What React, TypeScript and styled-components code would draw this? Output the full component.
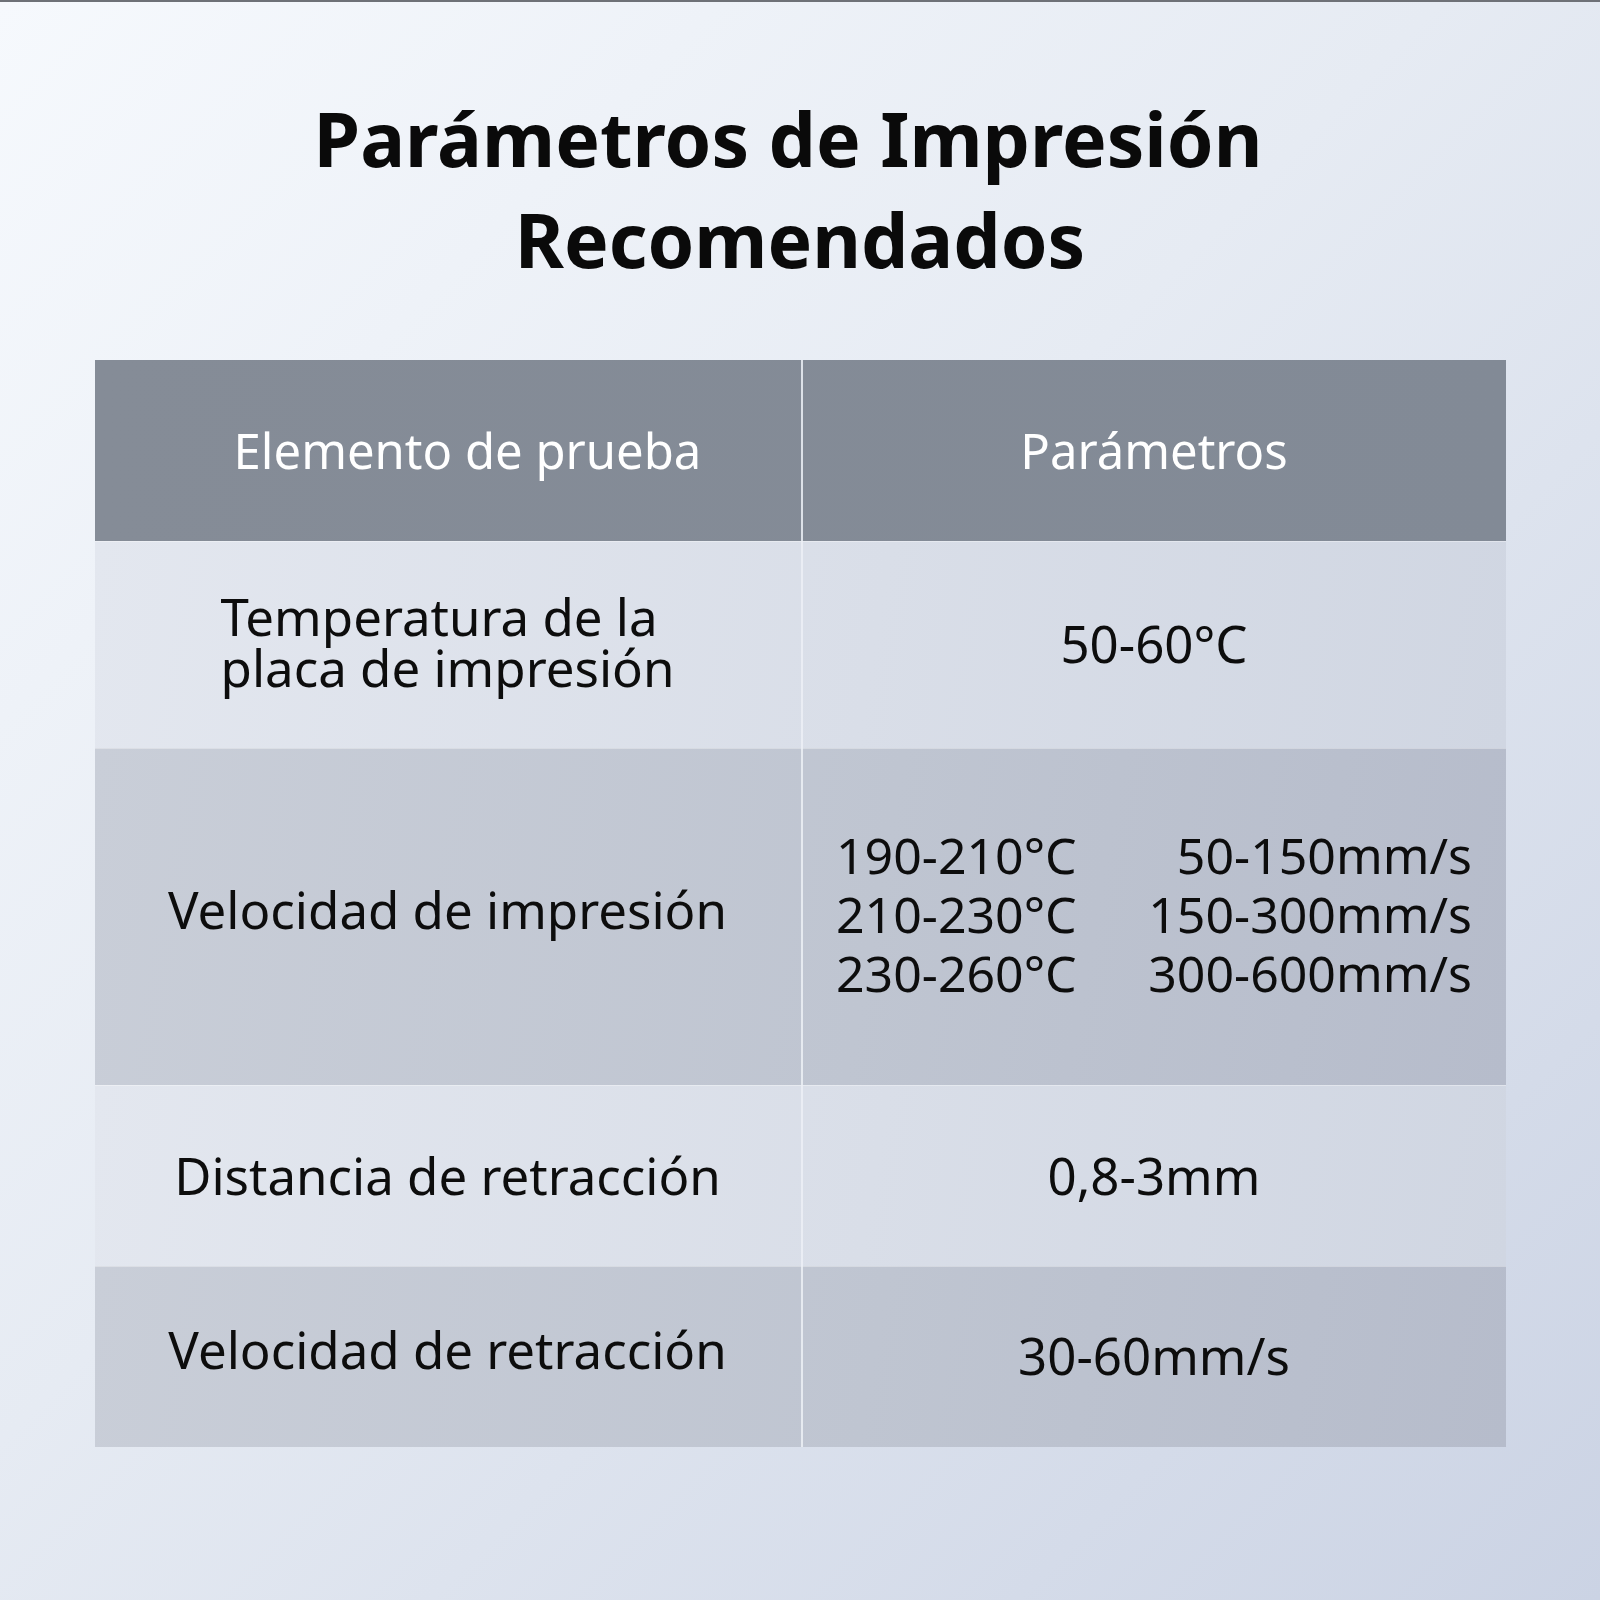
import * as React from "react";
import styled, { createGlobalStyle } from "styled-components";

const GlobalStyle = createGlobalStyle`
  html, body {
    margin: 0;
    padding: 0;
  }
  body {
    font-family: "Noto Sans", "Open Sans", sans-serif;
  }
`;

const Page = styled.div`
  width: 1600px;
  height: 1600px;
  box-sizing: border-box;
  border-top: 2px solid #6e7177;
  background: linear-gradient(135deg, #f6f9fd 0%, #e6ebf3 45%, #cbd3e4 100%);
  display: flex;
  flex-direction: column;
  align-items: center;
`;

const Title = styled.h1`
  margin: 86px 0 0;
  font-family: "Noto Sans", sans-serif;
  font-weight: 700;
  font-size: 75px;
  line-height: 101px;
  color: #0a0a0a;
  text-align: center;
`;

const TitleLine = styled.span<{ $shift?: number }>`
  display: block;
  margin-right: ${(p) => p.$shift ?? 0}px;
`;

const Table = styled.div`
  margin-top: 70px;
  width: 1411px;
  display: grid;
  grid-template-columns: 706px 705px;
`;

const Row = styled.div<{ $height: number; $tone: "head" | "light" | "dark" }>`
  grid-column: 1 / -1;
  display: grid;
  grid-template-columns: 706px 2px 703px;
  height: ${(p) => p.$height}px;
  background: ${(p) =>
    p.$tone === "head"
      ? "linear-gradient(90deg, #858c97 0%, #828a96 100%)"
      : p.$tone === "light"
      ? "linear-gradient(100deg, #e3e7ef 0%, #d9dee8 55%, #d0d6e2 100%)"
      : "linear-gradient(100deg, #c9ced8 0%, #bfc5d1 55%, #b6bccb 100%)"};
  box-shadow: ${(p) =>
    p.$tone === "head" ? "none" : "inset 0 1px 0 rgba(255,255,255,0.35)"};
`;

const Divider = styled.div`
  background: rgba(236, 240, 246, 0.85);
`;

const Cell = styled.div<{ $head?: boolean; $shift?: number; $raise?: number }>`
  display: flex;
  align-items: center;
  justify-content: center;
  padding-left: ${(p) => p.$shift ?? 0}px;
  padding-bottom: ${(p) => p.$raise ?? 0}px;
  font-size: ${(p) => (p.$head ? 49 : 51)}px;
  line-height: 1.1;
  color: ${(p) => (p.$head ? "#ffffff" : "#0d0d0d")};
  text-align: left;
  white-space: nowrap;
`;

const TwoLine = styled.div`
  line-height: 51px;
`;

const SpeedGrid = styled.div`
  box-sizing: border-box;
  display: grid;
  grid-template-columns: auto auto;
  justify-content: space-between;
  width: 636px;
  font-size: 50px;
  line-height: 59px;
`;

const Temp = styled.span`
  text-align: left;
`;

const Speed = styled.span`
  text-align: right;
`;

const speeds = [
  ["190-210°C", "50-150mm/s"],
  ["210-230°C", "150-300mm/s"],
  ["230-260°C", "300-600mm/s"],
];

export default function App() {
  return (
    <Page>
      <GlobalStyle />
      <Title>
        <TitleLine $shift={24}>Parámetros de Impresión</TitleLine>
        <TitleLine>Recomendados</TitleLine>
      </Title>
      <Table>
        <Row $height={181} $tone="head">
          <Cell $head $shift={40}>Elemento de prueba</Cell>
          <Divider />
          <Cell $head>Parámetros</Cell>
        </Row>
        <Row $height={207} $tone="light">
          <Cell $raise={6}>
            <TwoLine>
              Temperatura de la
              <br />
              placa de impresión
            </TwoLine>
          </Cell>
          <Divider />
          <Cell $raise={2}>50-60°C</Cell>
        </Row>
        <Row $height={337} $tone="dark">
          <Cell $raise={14}>Velocidad de impresión</Cell>
          <Divider />
          <Cell $raise={4}>
            <SpeedGrid>
              {speeds.map(([t, s]) => (
                <React.Fragment key={t}>
                  <Temp>{t}</Temp>
                  <Speed>{s}</Speed>
                </React.Fragment>
              ))}
            </SpeedGrid>
          </Cell>
        </Row>
        <Row $height={181} $tone="light">
          <Cell>Distancia de retracción</Cell>
          <Divider />
          <Cell>0,8-3mm</Cell>
        </Row>
        <Row $height={181} $tone="dark">
          <Cell $raise={14}>Velocidad de retracción</Cell>
          <Divider />
          <Cell $raise={2}>30-60mm/s</Cell>
        </Row>
      </Table>
    </Page>
  );
}
